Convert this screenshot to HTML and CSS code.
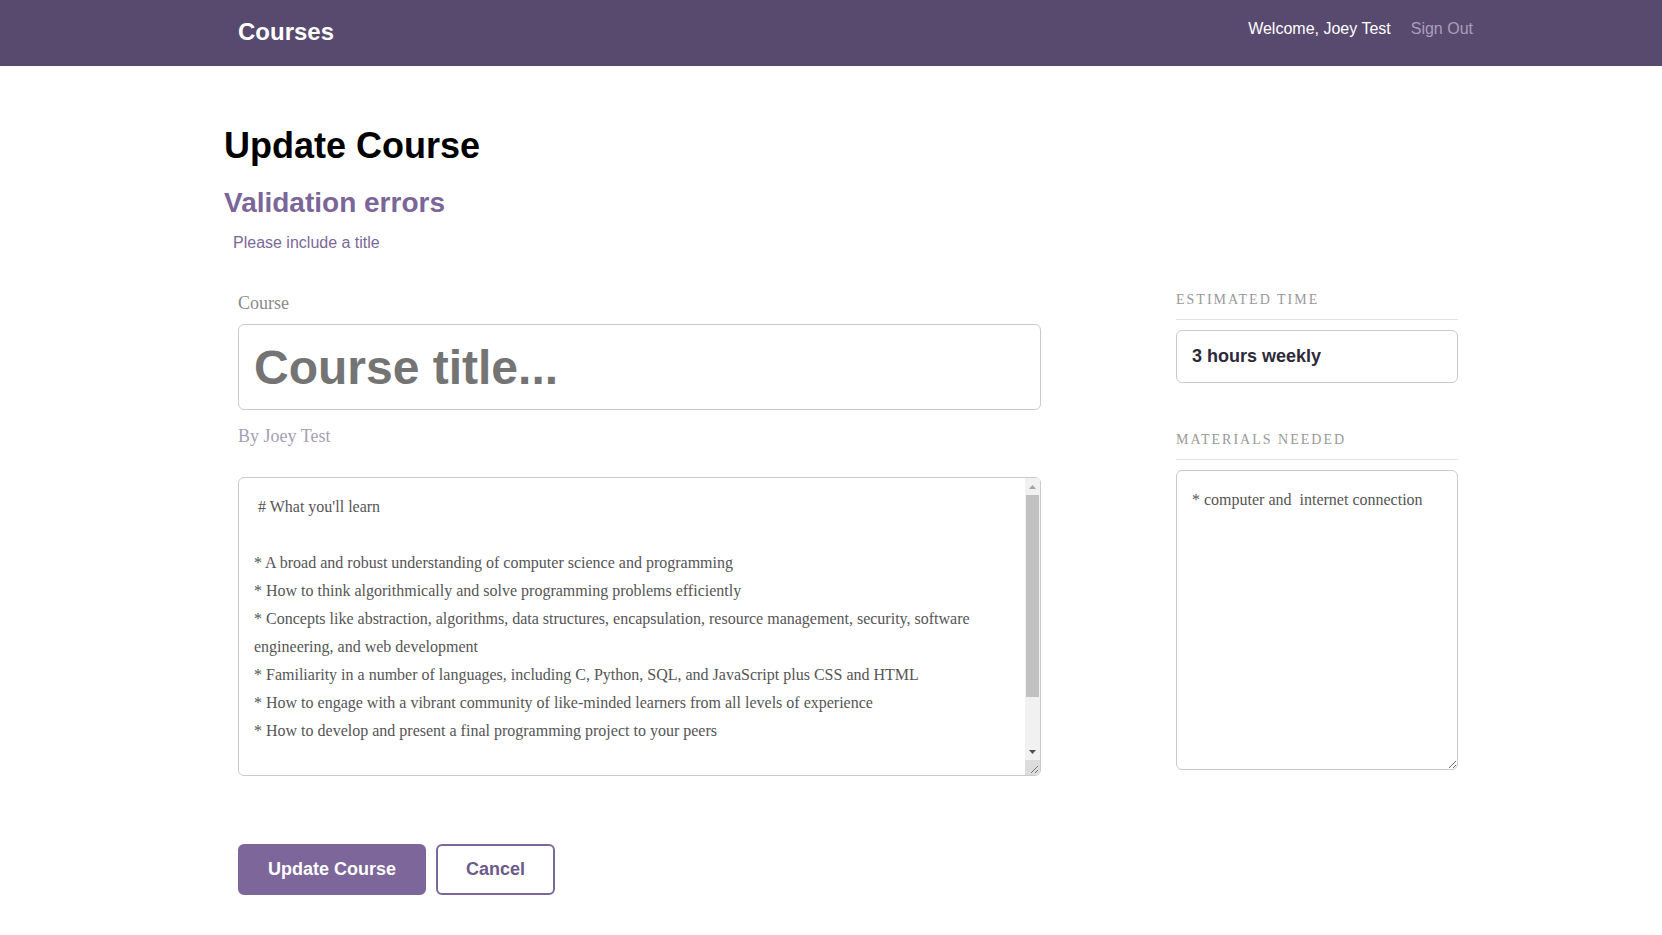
FILE: index.html
```html
<!DOCTYPE html>
<html lang="en">
<head>
<meta charset="utf-8">
<title>Courses</title>
<link rel="stylesheet" href="styles.css">
</head>
<body>
<header class="header">
  <div class="header-bounds">
    <h1 class="brand">Courses</h1>
    <nav class="user-nav">
      <span class="welcome">Welcome, Joey Test</span>
      <a class="signout" href="#">Sign Out</a>
    </nav>
  </div>
</header>
<main class="main">
  <h1 class="page-title">Update Course</h1>
  <h2 class="errors-title">Validation errors</h2>
  <ul class="errors">
    <li>Please include a title</li>
  </ul>
  <form class="course-form">
    <div class="col-main">
      <label class="course-label" for="title">Course</label>
      <input class="title-input" id="title" type="text" placeholder="Course title...">
      <p class="byline">By Joey Test</p>
      <div class="desc-wrap">
        <textarea class="desc"> # What you'll learn

* A broad and robust understanding of computer science and programming
* How to think algorithmically and solve programming problems efficiently
* Concepts like abstraction, algorithms, data structures, encapsulation, resource management, security, software engineering, and web development
* Familiarity in a number of languages, including C, Python, SQL, and JavaScript plus CSS and HTML
* How to engage with a vibrant community of like-minded learners from all levels of experience
* How to develop and present a final programming project to your peers</textarea>
        <div class="fake-scroll" aria-hidden="true">
          <div class="arrow arrow-up">
            <svg width="7" height="4" viewBox="0 0 7 4"><path d="M0 4 L3.5 0 L7 4 Z" fill="#a3a3a3"/></svg>
          </div>
          <div class="track"><div class="thumb"></div></div>
          <div class="arrow arrow-down">
            <svg width="7" height="4" viewBox="0 0 7 4"><path d="M0 0 L7 0 L3.5 4 Z" fill="#505050"/></svg>
          </div>
        </div>
        <div class="fake-corner" aria-hidden="true">
          <svg width="15" height="15" viewBox="0 0 15 15"><path d="M13 6 L6 13 M13 10 L10 13" stroke="#777" stroke-width="1" fill="none"/></svg>
        </div>
      </div>
      <div class="actions">
        <button class="btn btn-primary" type="button">Update Course</button>
        <button class="btn btn-secondary" type="button">Cancel</button>
      </div>
    </div>
    <aside class="col-side">
      <h4 class="side-label">Estimated Time</h4>
      <input class="time-input" type="text" value="3 hours weekly">
      <h4 class="side-label side-label-2">Materials Needed</h4>
      <textarea class="materials">* computer and  internet connection</textarea>
    </aside>
  </form>
</main>
</body>
</html>
```

FILE: styles.css
```css
* { box-sizing: border-box; }

body {
  margin: 0;
  background: #fff;
  font-family: "Liberation Sans", Arial, sans-serif;
}

.header {
  background: #574a6e;
  height: 66px;
}

.header-bounds {
  height: 66px;
  padding: 0 189px 0 238px;
  display: flex;
  align-items: center;
  justify-content: space-between;
}

.brand {
  margin: 0;
  font-size: 24px;
  line-height: 28px;
  font-weight: bold;
  color: #fff;
  padding-bottom: 2px;
}

.user-nav {
  display: flex;
  gap: 20px;
  padding-bottom: 8px;
  font-size: 16px;
  line-height: 20px;
}

.welcome { color: #fff; }

.signout {
  color: #a99fba;
  text-decoration: none;
}

.main {
  padding: 59px 0 0 224px;
}

.page-title {
  margin: 0;
  font-size: 36px;
  line-height: 42px;
  font-weight: bold;
  color: #000;
}

.errors-title {
  margin: 20px 0 0;
  font-size: 28px;
  line-height: 32px;
  color: #7b6599;
}

.errors {
  list-style: none;
  margin: 14px 0 0;
  padding: 0 0 0 9px;
  font-size: 16px;
  line-height: 20px;
  color: #7a6997;
}

.course-form {
  margin-top: 39px;
  padding-left: 14px;
  display: grid;
  grid-template-columns: 803px 282px;
  column-gap: 135px;
  align-items: start;
}

.col-main {
  display: flex;
  flex-direction: column;
  align-items: flex-start;
}

.course-label {
  font-family: "Liberation Serif", "Times New Roman", serif;
  font-size: 18px;
  line-height: 22px;
  color: #8a8a8a;
}

.title-input {
  margin-top: 10px;
  width: 803px;
  height: 86px;
  border: 1px solid #cbc8d3;
  border-radius: 6px;
  padding: 0 15px;
  font-family: "Liberation Sans", Arial, sans-serif;
  font-size: 48px;
  font-weight: bold;
  color: #333;
  outline: none;
}

.title-input::placeholder {
  color: #747474;
  opacity: 1;
}

.byline {
  margin: 14px 0 0;
  font-family: "Liberation Serif", "Times New Roman", serif;
  font-size: 18px;
  line-height: 24px;
  color: #a69fb4;
}

.desc,
.materials {
  display: block;
  border: 1px solid #cbc8d3;
  border-radius: 6px;
  padding: 15px;
  font-family: "Liberation Serif", "Times New Roman", serif;
  font-size: 16px;
  line-height: 28px;
  color: #555;
  outline: none;
  resize: vertical;
}

.desc-wrap {
  position: relative;
  margin-top: 29px;
  width: 803px;
  height: 299px;
}

.desc {
  width: 803px;
  height: 299px;
  padding-right: 30px;
  overflow: hidden;
  resize: none;
}

.fake-scroll {
  position: absolute;
  top: 1px;
  right: 1px;
  width: 15px;
  height: 282px;
  background: #f1f1f1;
  display: flex;
  flex-direction: column;
}

.arrow {
  height: 17px;
  display: flex;
  align-items: center;
  justify-content: center;
  flex: none;
}

.track {
  flex: 1;
  padding: 0 1px;
}

.thumb {
  height: 202px;
  background: #c1c1c1;
}

.fake-corner {
  position: absolute;
  right: 1px;
  bottom: 1px;
  width: 15px;
  height: 15px;
  background: #dcdcdc;
  border-bottom-right-radius: 5px;
}

.fake-corner svg { display: block; }

.actions {
  margin-top: 68px;
  display: flex;
  gap: 10px;
}

.btn {
  height: 51px;
  padding: 0 28px;
  border: 2px solid #7d6699;
  border-radius: 6px;
  font-family: "Liberation Sans", Arial, sans-serif;
  font-size: 18px;
  font-weight: bold;
  cursor: pointer;
}

.btn-primary {
  background: #7d6699;
  color: #fff;
}

.btn-secondary {
  background: #fff;
  color: #6c5a88;
}

.col-side {
  display: flex;
  flex-direction: column;
}

.side-label {
  margin: 0;
  padding-bottom: 11px;
  border-bottom: 1px solid #e3e1e8;
  font-family: "Liberation Serif", "Times New Roman", serif;
  font-size: 14px;
  line-height: 16px;
  font-weight: normal;
  letter-spacing: 2px;
  text-transform: uppercase;
  color: #999;
}

.side-label-2 {
  margin-top: 49px;
}

.time-input {
  margin-top: 10px;
  width: 282px;
  height: 53px;
  border: 1px solid #cbc8d3;
  border-radius: 6px;
  padding: 0 15px;
  font-family: "Liberation Sans", Arial, sans-serif;
  font-size: 18px;
  font-weight: bold;
  color: #2d2939;
  outline: none;
}

.materials {
  margin-top: 10px;
  width: 282px;
  height: 300px;
}
```
